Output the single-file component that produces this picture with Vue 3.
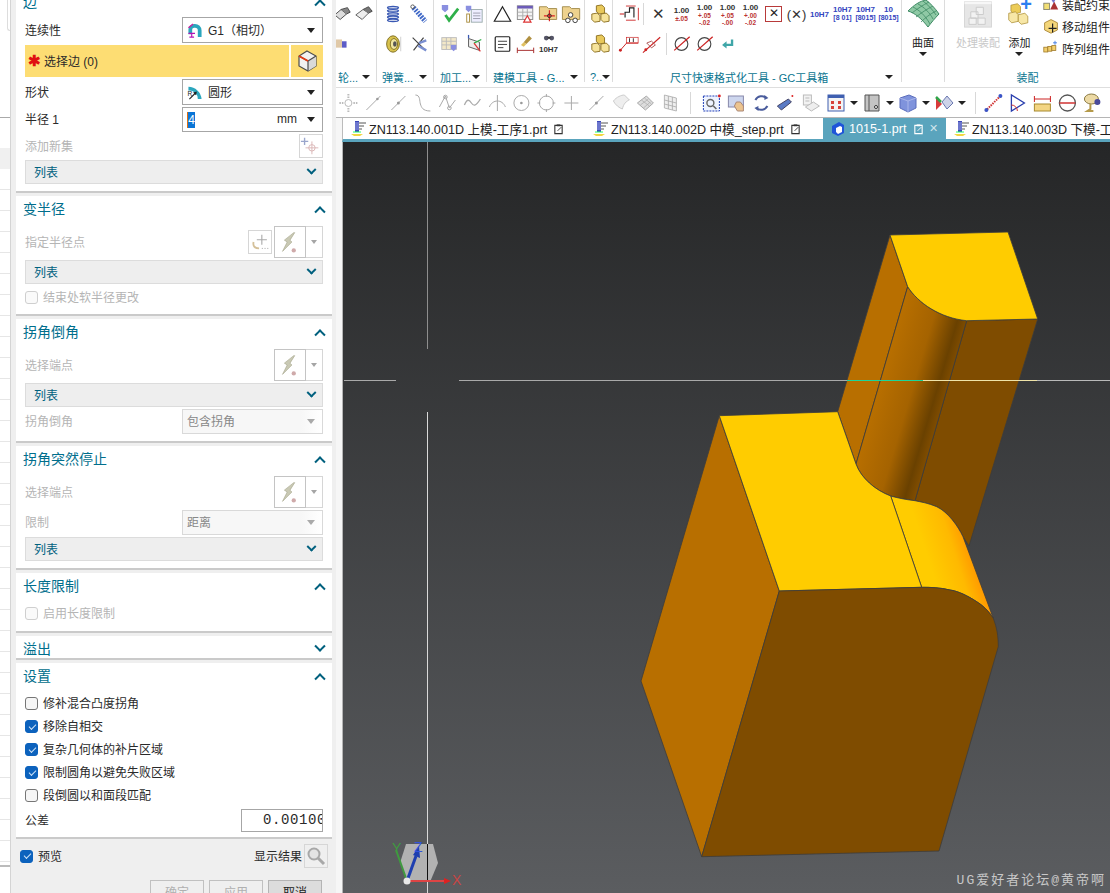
<script setup>
const tb1 = ['t-move','t-line','t-line2','t-curve','t-poly','t-wave','t-arc','t-circ','t-ring','t-plus','t-line2','t-surf','t-mesh','t-grid']
const tb2 = ['t-measure','t-angle','t-ruler','t-dia','t-palette']
const r6a = [
  { t: '1.00', s: '±.05' }, { t: '1.00', s: '+.05\n-.02' }, { t: '1.00', s: '+.05\n-.00' }, { t: '1.00', s: '+.00\n-.02' }
]
</script>

<template>
  <div class="app">
    <svg class="defs" width="0" height="0" aria-hidden="true">
      <symbol id="i-g1" viewBox="0 0 16 16"><path d="M1 12V7a6 6 0 0 1 6-6h1a7 7 0 0 1 7 7v7h-4V8a3 3 0 0 0-3-3H7a2 2 0 0 0-2 2v5z" fill="#2ba6bd"/><path d="M1 5 6 1" stroke="#d01f9d" stroke-width="1.4"/><path d="M1 11h7M4.500 11v4M2 15h5" stroke="#b414b4" stroke-width="1.2" fill="none"/></symbol>
      <symbol id="i-round" viewBox="0 0 16 16"><path d="M1 2a14 14 0 0 1 14 13h-4A9 9 0 0 0 1 6z" fill="#2ba6bd"/><path d="M2 15 9 8" stroke="#222" stroke-width="1.2"/><path d="M6 8 10 7 9 11z" fill="#222"/><text x="0" y="12" font-size="7" fill="#222" font-family="Liberation Sans">R</text></symbol>
      <symbol id="i-cube" viewBox="0 0 22 22"><path d="M11 1 20 6v10l-8 5-9-5V6z" fill="#f2f2f2" stroke="#4d4d4d" stroke-width="1.2"/><path d="M12 11l8-5v10l-8 5z" fill="#d9d9d9"/><path d="M3 6l9 5 8-5M12 11v10" fill="none" stroke="#4d4d4d" stroke-width="1.2"/><path d="M3 6l9 5" stroke="#e23b14" stroke-width="1.8"/></symbol>
      <symbol id="i-target" viewBox="0 0 24 24"><path d="M5 3v8M1 7h8" stroke="#9aa6cc" stroke-width="1.500"/><circle cx="13" cy="14" r="3.500" fill="none" stroke="#d9b3b3"/><path d="M13 7v14M6 14h14" stroke="#d9b3b3"/></symbol>
      <symbol id="i-bolt" viewBox="0 0 32 32"><path d="M20 6 10 14l3 2-5 10 10-10-2-2 5-8z" fill="#c9c9b4" stroke="#a9a98f" stroke-width=".7"/><circle cx="20" cy="25" r="2.300" fill="#cfaaaa"/></symbol>
      <symbol id="i-addpt" viewBox="0 0 24 24"><path d="M14 4v11M8.500 9.500h11" stroke="#aaa" stroke-width="1.200"/><path d="M5 12c-1 4 1 7 6 7" fill="none" stroke="#d4c099" stroke-width="2"/><path d="M14 19h1m2 0h1m2 0h1" stroke="#999"/></symbol>

      <symbol id="r-cut" viewBox="0 0 22 22"><path d="M3 12 10 6l6 5-7 6z" fill="#ddd" stroke="#444"/><path d="M10 6l7-2 3 5-4 2" fill="#888" stroke="#444"/></symbol>
      <symbol id="r-cut2" viewBox="0 0 22 22"><path d="M2 12 10 6l6 4-7 7z" fill="#eee" stroke="#555"/><path d="M10 6l6-3 4 5-4 2" fill="#777" stroke="#444"/></symbol>
      <symbol id="r-tag" viewBox="0 0 22 22"><rect x="3" y="6" width="8" height="9" fill="#e0c9a8"/><rect x="11" y="8" width="5" height="7" fill="#5c5cc8"/></symbol>
      <symbol id="r-coil" viewBox="0 0 22 22"><g stroke="#3958b3" stroke-width="1.500" fill="none"><ellipse cx="11" cy="4" rx="6" ry="1.300"/><ellipse cx="11" cy="7.500" rx="6" ry="1.300"/><ellipse cx="11" cy="11" rx="6" ry="1.300"/><ellipse cx="11" cy="14.500" rx="6" ry="1.300"/><ellipse cx="11" cy="18" rx="6" ry="1.300"/></g></symbol>
      <symbol id="r-spring" viewBox="0 0 22 22"><path d="M5 4 18 19" stroke="#3f68c7" stroke-width="5.500" stroke-dasharray="2 1.200"/><circle cx="4" cy="3" r="2" fill="none" stroke="#555"/></symbol>
      <symbol id="r-roll" viewBox="0 0 22 22"><ellipse cx="11" cy="11" rx="7" ry="9" fill="#d8c24d" stroke="#7b6a20"/><ellipse cx="12" cy="11" rx="4" ry="6" fill="#f0e6a0" stroke="#7b6a20"/><ellipse cx="13" cy="11" rx="2" ry="3" fill="#555"/><path d="M19.500 3v16" stroke="#ccc"/></symbol>
      <symbol id="r-x" viewBox="0 0 22 22"><path d="M4 4 17 17M16 4 5 18" stroke="#444" stroke-width="1.300"/><path d="M11 10 19 7M10 13l9 5" stroke="#7a8fd0" stroke-width="2.600"/></symbol>
      <symbol id="r-ok" viewBox="0 0 22 22"><path d="M2 1h7v5L5.500 9 2 6z" fill="#8a8fe0"/><path d="M6 12 10 18 20 5" fill="none" stroke="#2fb04a" stroke-width="3"/></symbol>
      <symbol id="r-doc" viewBox="0 0 22 22"><rect x="8" y="6" width="12" height="14" fill="#eef" stroke="#9aa"/><path d="M10 10h8M10 13h8M10 16h8" stroke="#99a"/><path d="M2 2h6v4L5 9 2 6z" fill="#8a8fe0"/><rect x="3" y="11" width="3" height="9" fill="none" stroke="#a88b3c"/></symbol>
      <symbol id="r-sheet" viewBox="0 0 22 22"><rect x="2" y="4" width="16" height="13" fill="#f3e8c8" stroke="#bbb"/><path d="M2 8h16M2 12h16M7 4v13M12 4v13" stroke="#bbb"/><path d="M12 12h6v4l-3 3-3-3z" fill="#8a8fe0"/></symbol>
      <symbol id="r-axes" viewBox="0 0 22 22"><path d="M5 5 17 9v9L5 14z" fill="#eee" stroke="#555"/><path d="M5 5V1" stroke="#3958b3" stroke-width="1.400"/><path d="M11 10l8-4" stroke="#2fb04a" stroke-width="1.400"/><path d="M11 10l7 9" stroke="#d33" stroke-width="1.400"/></symbol>
      <symbol id="r-tri" viewBox="0 0 22 22"><path d="M11 3 20 19H2z" fill="#fff" stroke="#222" stroke-width="1.300"/></symbol>
      <symbol id="r-table" viewBox="0 0 22 22"><rect x="2" y="2" width="17" height="15" fill="#f4f4f4" stroke="#888"/><rect x="2" y="2" width="17" height="3" fill="#6c5bb8"/><path d="M2 9h17M2 13h17M8 5v12M13 5v12" stroke="#aaa"/><path d="M13 13 17 20H9z" fill="#fff" stroke="#d33" stroke-width="1.300"/></symbol>
      <symbol id="r-folder1" viewBox="0 0 22 22"><path d="M1 3h8l2 2h9v12H1z" fill="#eed28e" stroke="#a08a4a"/><path d="M12 7v12M6 13h12" stroke="#d22" stroke-width="1.300"/><circle cx="12" cy="13" r="2" fill="none" stroke="#222"/></symbol>
      <symbol id="r-folder2" viewBox="0 0 22 22"><path d="M1 3h8l2 2h9v12H1z" fill="#eed28e" stroke="#a08a4a"/><circle cx="10" cy="12" r="2.500" fill="#fff" stroke="#333"/><circle cx="7" cy="18" r="2.500" fill="#fff" stroke="#333"/><circle cx="15" cy="18" r="2.500" fill="#fff" stroke="#333"/></symbol>
      <symbol id="r-note" viewBox="0 0 22 22"><rect x="3" y="3" width="16" height="16" rx="1" fill="#fff" stroke="#222" stroke-width="1.300"/><path d="M6 8h10M6 11.500h10M6 15h6" stroke="#333"/></symbol>
      <symbol id="r-brush" viewBox="0 0 22 22"><path d="M15 2 18 5 12 11 9 9z" fill="#b09040"/><path d="M9 9l3 2-3 3-3-2z" fill="#e0c060"/><path d="M2 18h18M2 15v6M20 15v6" stroke="#a33" stroke-width="1.100"/></symbol>
      <symbol id="r-bino" viewBox="0 0 22 22"><circle cx="7" cy="6" r="3.500" fill="#556"/><circle cx="15" cy="6" r="3.500" fill="#556"/><rect x="9" y="4" width="4" height="3" fill="#333"/></symbol>
      <symbol id="r-boxes" viewBox="0 0 22 22"><path d="M7 2 13 1l3 3v6l-6 1-3-3z" fill="#e8c85a" stroke="#8a6d1f"/><path d="M2 11l6-1 3 3v6l-6 1-3-3z" fill="#f6e39a" stroke="#8a6d1f"/><path d="M12 11l6-1 3 3v6l-6 1-3-3z" fill="#f6e39a" stroke="#8a6d1f"/></symbol>
      <symbol id="r-dim1" viewBox="0 0 26 22"><path d="M2 11h5" stroke="#c22" stroke-width="1.200"/><path d="M8 15V9h5V4h5v11" fill="none" stroke="#222" stroke-width="1.300"/><path d="M9 18h11M9 2h11M23 4v14" fill="none" stroke="#c22"/></symbol>
      <symbol id="r-rdim" viewBox="0 0 24 20"><path d="M2 17 9 9h12" fill="none" stroke="#c22"/><rect x="9" y="3" width="12" height="6" fill="none" stroke="#c22" stroke-width=".7"/><path d="M12 4v4M16 4v4" stroke="#333"/><circle cx="2.500" cy="16.500" r="1.500" fill="#c22"/></symbol>
      <symbol id="r-rdim2" viewBox="0 0 24 20"><path d="M2 19 20 3" stroke="#c22" stroke-width="1.200"/><path d="M6 9l5-2 4 4-4 3z" fill="none" stroke="#a55"/><circle cx="5" cy="16" r="1.500" fill="#c22"/></symbol>
      <symbol id="r-dia" viewBox="0 0 22 22"><circle cx="11" cy="11" r="7" fill="#fff" stroke="#444" stroke-width="1.200"/><path d="M3 18 20 3" stroke="#c22" stroke-width="1.400"/></symbol>
      <symbol id="r-ret" viewBox="0 0 22 22"><path d="M16 6v6H9" fill="none" stroke="#3fa6a8" stroke-width="2.600"/><path d="M10 8 5 12l5 4z" fill="#3fa6a8"/></symbol>
      <symbol id="r-surface" viewBox="0 0 34 30"><path d="M2 12C8 6 14 2 20 1c4 3 9 8 13 14-4 4-8 9-11 13C16 20 9 14 2 12z" fill="#8fc9a5" stroke="#3f8a65"/><path d="M7 8c6 3 12 8 17 17M12 5c6 3 12 9 15 15M17 2c5 4 10 9 13 14M6 14C11 10 17 6 23 3M10 18c5-4 11-8 17-11M15 23c4-4 9-8 15-11" fill="none" stroke="#3f8a65" stroke-width=".8"/></symbol>
      <symbol id="r-proc" viewBox="0 0 32 30"><rect x="1" y="1" width="30" height="28" fill="#e6e6e6" stroke="#d4d4d4"/><rect x="1" y="1" width="30" height="2.500" fill="#f7f7f7"/><path d="M8 12h8v7H8zM16 19h8v7h-8zM6 19h8v7H6zM14 7h8v8h-8z" fill="#f2f2f2" stroke="#c8c8c8"/></symbol>
      <symbol id="r-add" viewBox="0 0 30 30"><path d="M4 3 13 1l4 4v8l-9 2-4-4z" fill="#eccc58" stroke="#a88a2f"/><path d="M1 14l9-2 4 4v9l-9 2-4-4z" fill="#f7e7a7" stroke="#a88a2f"/><path d="M14 16l9-2 4 4v9l-9 2-4-4z" fill="#f7e7a7" stroke="#a88a2f"/></symbol>
      <symbol id="r-constraint" viewBox="0 0 20 18"><rect x="1" y="8" width="7" height="8" fill="#f1de74" stroke="#776"/><path d="M9 16 14 6l5 10z" fill="#a33"/><path d="M9 1l4 7 4-7" fill="#77c"/></symbol>
      <symbol id="r-mv" viewBox="0 0 20 20"><path d="M2 6 10 2l8 4v9l-8 4-8-4z" fill="#f4d67a" stroke="#a07a28"/><path d="M12 7v11M7 13h10" stroke="#222" stroke-width="1.500"/></symbol>
      <symbol id="r-arr" viewBox="0 0 20 18"><rect x="1" y="8" width="5" height="6" fill="#f2cf6c" stroke="#a07a28"/><rect x="6" y="7" width="5" height="6" fill="#f2cf6c" stroke="#a07a28"/><rect x="11" y="6" width="5" height="6" fill="#f2cf6c" stroke="#a07a28"/><path d="M15 0v5M12.500 2.500h5" stroke="#2d6fe0"/></symbol>

      <symbol id="t-move" viewBox="0 0 20 20"><circle cx="10" cy="10" r="3.500" fill="none" stroke="#bbb"/><path d="M10 1v4M10 15v4M1 10h4M15 10h4" stroke="#bbb" stroke-width="2" stroke-dasharray="1.500 1"/></symbol>
      <symbol id="t-line" viewBox="0 0 20 20"><path d="M3 17 17 3" stroke="#aaa"/><circle cx="14" cy="6" r="1.300" fill="#999"/></symbol>
      <symbol id="t-line2" viewBox="0 0 20 20"><path d="M3 17 17 3" stroke="#aaa"/><circle cx="10" cy="10" r="1.500" fill="#999"/></symbol>
      <symbol id="t-curve" viewBox="0 0 20 20"><path d="M3 2c5 0 4 6 5 9s2 7 10 7" fill="none" stroke="#aaa"/></symbol>
      <symbol id="t-poly" viewBox="0 0 20 20"><path d="M2 14 8 3l4 12 6-8" fill="none" stroke="#aaa"/><circle cx="8" cy="4" r="1.800" fill="none" stroke="#aaa"/><circle cx="12" cy="15" r="1.800" fill="none" stroke="#aaa"/></symbol>
      <symbol id="t-wave" viewBox="0 0 20 20"><path d="M2 12c3-7 5-5 7-2s4 4 9-4" fill="none" stroke="#aaa" stroke-width="1.300"/></symbol>
      <symbol id="t-arc" viewBox="0 0 20 20"><path d="M2 14c3-8 13-8 16 0M10 2v16" fill="none" stroke="#aaa"/></symbol>
      <symbol id="t-circ" viewBox="0 0 20 20"><circle cx="10" cy="10" r="7.500" fill="none" stroke="#aaa"/><circle cx="10" cy="10" r="1.300" fill="#999"/></symbol>
      <symbol id="t-ring" viewBox="0 0 20 20"><circle cx="10" cy="10" r="7" fill="none" stroke="#aaa"/><path d="M10 1v3M10 16v3M1 10h3M16 10h3" stroke="#aaa"/></symbol>
      <symbol id="t-plus" viewBox="0 0 20 20"><path d="M10 3v14M3 10h14" stroke="#aaa"/></symbol>
      <symbol id="t-surf" viewBox="0 0 20 20"><path d="M2 8c3-4 8-6 11-6l5 5c-3 1-6 4-7 9-3-1-7-4-9-8z" fill="#eee" stroke="#ccc"/></symbol>
      <symbol id="t-mesh" viewBox="0 0 20 20"><path d="M2 10 11 3l7 7-8 7z" fill="#ddd" stroke="#aaa"/><path d="M6 7l8 6M9 5l7 6M5 12l8-6M8 15l7-6" stroke="#aaa" stroke-width=".7"/></symbol>
      <symbol id="t-grid" viewBox="0 0 20 20"><path d="M4 2 16 5v13L4 15zM8 3v13M12 4v13M4 7l12 3M4 11l12 3" fill="#eee" stroke="#aaa" stroke-width=".8"/></symbol>
      <symbol id="t-fit" viewBox="0 0 20 20"><rect x="2" y="3" width="16" height="15" fill="#eef3ff" stroke="#2240b8" stroke-dasharray="2 1"/><circle cx="9" cy="10" r="3.500" fill="none" stroke="#666" stroke-width="1.400"/><path d="M12 13l3 3" stroke="#666" stroke-width="1.600"/><circle cx="18" cy="3" r="1.400" fill="#d22"/></symbol>
      <symbol id="t-hand" viewBox="0 0 20 20"><rect x="2" y="3" width="15" height="11" fill="#cdd6ee" stroke="#88a"/><path d="M10 9h4l3 4v5h-6l-3-5z" fill="#ecc48f" stroke="#a87"/></symbol>
      <symbol id="t-rot" viewBox="0 0 20 20"><path d="M4 7a7 7 0 0 1 11-2M16 13a7 7 0 0 1-11 2" fill="none" stroke="#4a5c9c" stroke-width="2"/><path d="M13 2l4 3-4 2zM7 18l-4-3 4-2z" fill="#4a5c9c"/></symbol>
      <symbol id="t-prism" viewBox="0 0 20 20"><path d="M2 13 13 6l3 3-10 8z" fill="#5a7bc5" stroke="#446"/><circle cx="17" cy="3" r="1" fill="#d22"/></symbol>
      <symbol id="t-layers" viewBox="0 0 20 20"><rect x="3" y="2" width="8" height="10" fill="#f2f2f2" stroke="#bbb"/><path d="M5 5h4M5 8h4" stroke="#bbb"/><path d="M5 14l8-5 6 4-8 5z" fill="#eee" stroke="#bbb"/></symbol>
      <symbol id="t-view" viewBox="0 0 20 20"><rect x="2" y="2" width="16" height="16" fill="#f4f4f4" stroke="#3f5fb0"/><rect x="2" y="2" width="16" height="3" fill="#3f5fb0"/><path d="M5 8h3v3H5zM12 8h3v3h-3zM5 13h3v3H5zM12 13h3v3h-3z" fill="#d8433a"/></symbol>
      <symbol id="t-page" viewBox="0 0 20 20"><path d="M3 2h14v16H3z" fill="#c4c4c4" stroke="#555"/><path d="M7 2v16" stroke="#555"/><circle cx="14" cy="14" r="1.500" fill="#fff" stroke="#333"/></symbol>
      <symbol id="t-cube" viewBox="0 0 20 20"><path d="M2 5 11 2l7 3v10l-8 4-8-4z" fill="#7f93dc" stroke="#5b6dbc"/><path d="M2 5l8 3 8-3M10 8v11" fill="none" stroke="#aab6ea"/></symbol>
      <symbol id="t-show" viewBox="0 0 20 20"><path d="M8 9l5-6 6 7-6 6z" fill="#cdd3e8" stroke="#6a78b0"/><path d="M2 5l6 6-6 6z" fill="#d83a3a"/><path d="M2 4l5 5" stroke="#2fa54a" stroke-width="2.500"/></symbol>
      <symbol id="t-measure" viewBox="0 0 20 20"><path d="M2 18 18 2" stroke="#d03333" stroke-width="2" stroke-dasharray="1.500 1"/><circle cx="3" cy="17" r="2" fill="#3a55c8"/><circle cx="17" cy="3" r="2" fill="#3a55c8"/></symbol>
      <symbol id="t-angle" viewBox="0 0 20 20"><path d="M3 18V2l13 8z" fill="none" stroke="#2a3fae" stroke-width="1.300"/><path d="M3 12a6 6 0 0 1 6 6" fill="none" stroke="#d03333"/></symbol>
      <symbol id="t-ruler" viewBox="0 0 20 20"><rect x="2" y="11" width="16" height="7" fill="#f3d583" stroke="#a78a2f"/><path d="M2 6h16M2 3v6M18 3v6" stroke="#c22"/></symbol>
      <symbol id="t-dia" viewBox="0 0 20 20"><circle cx="10" cy="10" r="8" fill="#fff" stroke="#555" stroke-width="1.300"/><path d="M2 10h16" stroke="#d03333" stroke-width="1.400"/></symbol>
      <symbol id="t-palette" viewBox="0 0 20 20"><ellipse cx="9" cy="6" rx="7" ry="5" fill="#ecd9a4" stroke="#8a7a44"/><circle cx="15" cy="9" r="3" fill="#4a4a9a"/><path d="M8 11v5l-3 2h6" fill="none" stroke="#b59a4a" stroke-width="2"/></symbol>
      <symbol id="p-part" viewBox="0 0 16 18"><path d="M5 1h4v11H5z" fill="#3b47b8"/><path d="M5 3h4M5 5h4M5 7h4M5 9h4" stroke="#b7bfee" stroke-width=".8"/><path d="M9 3h7M9 6h5M9 9h3" stroke="#555"/><path d="M1 14h12l-3 2H4z" fill="#f3d640"/><path d="M3 12h8" stroke="#2f6"/></symbol>
      <symbol id="p-active" viewBox="0 0 16 16"><path d="M2 5 9 1l5 3v8l-6 3-6-3z" fill="#1f55d8"/><path d="M6 7l4-2 2 1v5l-4 2-2-2z" fill="#fff"/></symbol>
      <symbol id="p-mod" viewBox="0 0 12 12"><path d="M2 2h8v9H2z" fill="none" stroke="currentColor" stroke-width="1.200"/><path d="M4 1h4v2H4z" fill="currentColor"/><path d="M5 8l4-4" stroke="currentColor"/></symbol>
    </svg>

    <aside class="left">
      <div class="strip"><div class="strip-top"></div><div class="strip-rows"></div></div>
      <div class="dialog">
        <section class="sec first">
          <header class="hd"><span>边</span><i class="chev up"></i></header>
          <div class="body b-first">
            <div class="row h26"><label>连续性</label><div class="sel"><svg class="si"><use href="#i-g1"/></svg><span class="grow">G1（相切）</span><b class="tri"></b></div></div>
            <div class="pick">
              <div class="pick-l"><em>✱</em><span>选择边 (0)</span></div>
              <div class="pick-r"><svg class="cube"><use href="#i-cube"/></svg></div>
            </div>
            <div class="row h26"><label>形状</label><div class="sel"><svg class="si"><use href="#i-round"/></svg><span class="grow">圆形</span><b class="tri"></b></div></div>
            <div class="row h25"><label>半径 1</label><div class="sel num"><span class="hl">4</span><span class="unit">mm</span><b class="tri"></b></div></div>
            <div class="row h24"><label class="off">添加新集</label><div class="ibtn s24"><svg class="s22"><use href="#i-target"/></svg></div></div>
            <div class="list"><span>列表</span><i class="chev down"></i></div>
          </div>
        </section>

        <section class="sec">
          <header class="hd"><span>变半径</span><i class="chev up"></i></header>
          <div class="body b6">
            <div class="row h32"><label class="off">指定半径点</label>
              <div class="tools"><div class="ibtn s24"><svg class="s22"><use href="#i-addpt"/></svg></div><div class="ibtn s32"><svg class="s30"><use href="#i-bolt"/></svg></div><div class="ddb"><b class="tri sm"></b></div></div>
            </div>
            <div class="list"><span>列表</span><i class="chev down"></i></div>
            <div class="chk off h22"><i class="box"></i><span>结束处软半径更改</span></div>
          </div>
        </section>

        <section class="sec">
          <header class="hd"><span>拐角倒角</span><i class="chev up"></i></header>
          <div class="body">
            <div class="row h32"><label class="off">选择端点</label>
              <div class="tools"><div class="ibtn s32"><svg class="s30"><use href="#i-bolt"/></svg></div><div class="ddb"><b class="tri sm"></b></div></div>
            </div>
            <div class="list"><span>列表</span><i class="chev down"></i></div>
            <div class="row h25"><label class="off">拐角倒角</label><div class="sel dis"><span class="grow">包含拐角</span><b class="tri g"></b></div></div>
          </div>
        </section>

        <section class="sec">
          <header class="hd"><span>拐角突然停止</span><i class="chev up"></i></header>
          <div class="body">
            <div class="row h32"><label class="off">选择端点</label>
              <div class="tools"><div class="ibtn s32"><svg class="s30"><use href="#i-bolt"/></svg></div><div class="ddb"><b class="tri sm"></b></div></div>
            </div>
            <div class="row h25"><label class="off">限制</label><div class="sel dis"><span class="grow">距离</span><b class="tri g"></b></div></div>
            <div class="list"><span>列表</span><i class="chev down"></i></div>
          </div>
        </section>

        <section class="sec">
          <header class="hd"><span>长度限制</span><i class="chev up"></i></header>
          <div class="body b3">
            <div class="chk off h22"><i class="box"></i><span>启用长度限制</span></div>
          </div>
        </section>

        <section class="sec">
          <header class="hd short"><span>溢出</span><i class="chev down big"></i></header>
        </section>

        <section class="sec">
          <header class="hd"><span>设置</span><i class="chev up"></i></header>
          <div class="body b-set">
            <div class="chk h23"><i class="box"></i><span>修补混合凸度拐角</span></div>
            <div class="chk h23"><i class="box on"></i><span>移除自相交</span></div>
            <div class="chk h23"><i class="box on"></i><span>复杂几何体的补片区域</span></div>
            <div class="chk h23"><i class="box on"></i><span>限制圆角以避免失败区域</span></div>
            <div class="chk h23"><i class="box"></i><span>段倒圆以和面段匹配</span></div>
            <div class="row h23 tol"><label>公差</label><div class="tolv">0.00100</div></div>
          </div>
        </section>

        <footer class="foot">
          <div class="foot-row">
            <div class="chk"><i class="box on"></i><span>预览</span></div>
            <div class="res"><span>显示结果</span><div class="mag"><svg width="20" height="20" viewBox="0 0 20 20"><circle cx="8" cy="8" r="5.500" fill="#e4e4e4" stroke="#a8a8a8" stroke-width="2"/><path d="M12 12l6 6" stroke="#a8a8a8" stroke-width="3"/></svg></div></div>
          </div>
          <div class="btns"><div class="btn dim">确定</div><div class="btn dim">应用</div><div class="btn act">取消</div></div>
        </footer>
      </div>
    </aside>

    <main class="main">
      <div class="ribbon">
        <div class="grp g1">
          <div class="r"><svg class="ri c22"><use href="#r-cut"/></svg><svg class="ri c22"><use href="#r-cut2"/></svg></div>
          <div class="r"><svg class="ri c22"><use href="#r-tag"/></svg></div>
          <div class="gl"><span>轮...</span><b class="tri k"></b></div>
        </div>
        <div class="grp g2">
          <div class="r"><svg class="ri c26"><use href="#r-coil"/></svg><svg class="ri c26"><use href="#r-spring"/></svg></div>
          <div class="r"><svg class="ri c26"><use href="#r-roll"/></svg><svg class="ri c26"><use href="#r-x"/></svg></div>
          <div class="gl"><span>弹簧...</span><b class="tri k"></b></div>
        </div>
        <div class="grp g3">
          <div class="r"><svg class="ri c24"><use href="#r-ok"/></svg><svg class="ri c24"><use href="#r-doc"/></svg></div>
          <div class="r"><svg class="ri c24"><use href="#r-sheet"/></svg><svg class="ri c24"><use href="#r-axes"/></svg></div>
          <div class="gl"><span>加工...</span><b class="tri k"></b></div>
        </div>
        <div class="grp g4">
          <div class="r"><svg class="ri c23"><use href="#r-tri"/></svg><svg class="ri c23"><use href="#r-table"/></svg><svg class="ri c23"><use href="#r-folder1"/></svg><svg class="ri c23"><use href="#r-folder2"/></svg></div>
          <div class="r"><svg class="ri c23"><use href="#r-note"/></svg><svg class="ri c23"><use href="#r-brush"/></svg><div class="cell23 bino"><svg class="b18"><use href="#r-bino"/></svg><span>10H7</span></div></div>
          <div class="gl"><span>建模工具 - G...</span><b class="tri k"></b></div>
        </div>
        <div class="grp g5">
          <div class="r"><svg class="ri c24"><use href="#r-boxes"/></svg></div>
          <div class="r"><svg class="ri c24"><use href="#r-boxes"/></svg></div>
          <div class="gl"><span>?..</span><b class="tri k"></b></div>
        </div>
        <div class="grp g6">
          <div class="r">
            <svg class="ri c23"><use href="#r-dim1"/></svg><i class="vs"></i>
            <span class="c23 xx">✕</span>
            <span v-for="v in r6a" :key="v.s" class="c23 tol-t"><u>{{ v.t }}</u><s>{{ v.s }}</s></span>
            <span class="c23 bx"><i>✕</i></span>
            <span class="c23 px">(✕)</span>
            <span class="c23 h7">10H7</span>
            <span class="c23 h7b"><u>10H7</u><s>[8 01]</s></span>
            <span class="c23 h7b"><u>10H7</u><s>[8015]</s></span>
            <span class="c23 h7b"><u>10</u><s>[8015]</s></span>
          </div>
          <div class="r">
            <svg class="ri c23"><use href="#r-rdim"/></svg><svg class="ri c23"><use href="#r-rdim2"/></svg><i class="vs"></i>
            <svg class="ri c23"><use href="#r-dia"/></svg><svg class="ri c23"><use href="#r-dia"/></svg><svg class="ri c23"><use href="#r-ret"/></svg>
          </div>
          <div class="gl wide"><span>尺寸快速格式化工具 - GC工具箱</span><b class="tri k"></b></div>
        </div>
        <div class="grp g7">
          <svg class="surf"><use href="#r-surface"/></svg>
          <span class="big-l">曲面</span><b class="tri k drop"></b>
        </div>
        <div class="grp g8">
          <div class="tall">
            <div class="bigb"><svg class="proc"><use href="#r-proc"/></svg><span class="big-l dimt">处理装配</span></div>
            <div class="bigb addb"><svg class="addi"><use href="#r-add"/></svg><i class="plus">+</i><span class="big-l">添加</span><b class="tri k drop"></b></div>
            <div class="mini">
              <div><svg><use href="#r-constraint"/></svg><span>装配约束</span></div>
              <div><svg><use href="#r-mv"/></svg><span>移动组件</span></div>
              <div><svg><use href="#r-arr"/></svg><span>阵列组件</span></div>
            </div>
          </div>
          <div class="gl center"><span>装配</span></div>
        </div>
      </div>

      <div class="toolbar">
        <svg v-for="(n, i) in tb1" :key="i" class="tbi"><use :href="'#' + n"/></svg>
        <i class="tsep s1"></i>
        <svg class="tbi"><use href="#t-fit"/></svg><svg class="tbi"><use href="#t-hand"/></svg><svg class="tbi"><use href="#t-rot"/></svg><svg class="tbi"><use href="#t-prism"/></svg><svg class="tbi"><use href="#t-layers"/></svg>
        <div class="dd first-dd"><svg class="tbs"><use href="#t-view"/></svg><b class="tri k"></b></div>
        <div class="dd"><svg class="tbs"><use href="#t-page"/></svg><b class="tri k"></b></div>
        <div class="dd"><svg class="tbs"><use href="#t-cube"/></svg><b class="tri k"></b></div>
        <div class="dd"><svg class="tbs"><use href="#t-show"/></svg><b class="tri k"></b></div>
        <i class="tsep s2"></i>
        <svg v-for="n in tb2" :key="n" class="tbi"><use :href="'#' + n"/></svg>
      </div>

      <div class="tabs">
        <div class="tab tab1"><svg class="pi"><use href="#p-part"/></svg><span>ZN113.140.001D 上模-工序1.prt</span><svg class="mod"><use href="#p-mod"/></svg></div>
        <div class="tab tab2"><svg class="pi"><use href="#p-part"/></svg><span>ZN113.140.002D 中模_step.prt</span><svg class="mod"><use href="#p-mod"/></svg></div>
        <div class="tab active"><svg class="pi"><use href="#p-active"/></svg><span>1015-1.prt</span><svg class="mod"><use href="#p-mod"/></svg><i class="close">✕</i></div>
        <div class="tab"><svg class="pi"><use href="#p-part"/></svg><span>ZN113.140.003D 下模-工序1.prt</span></div>
      </div>

      <div class="view">
        <svg class="scene" viewBox="343 142 767 751" width="767" height="751">
          <defs>
            <linearGradient id="fil" gradientUnits="userSpaceOnUse" x1="880" y1="380" x2="944" y2="399">
              <stop offset="0" stop-color="#b86f00"/><stop offset=".5" stop-color="#a56300"/><stop offset=".86" stop-color="#6a4100"/><stop offset="1" stop-color="#7f4c00"/>
            </linearGradient>
            <linearGradient id="yel" gradientUnits="userSpaceOnUse" x1="925" y1="550" x2="968" y2="536">
              <stop offset="0" stop-color="#ffcc00"/><stop offset=".6" stop-color="#ffb900"/><stop offset="1" stop-color="#ff9500"/>
            </linearGradient>
          </defs>
          <g stroke="#3c3c3c" stroke-width=".8" stroke-linejoin="round">
            <path d="M890 235 907.700 286.700 856 464 837.700 411.700z" fill="#b86f00"/>
            <path d="M966.700 320.700 1037.700 319 969 546 963 536.700C958 526 948 512 936.700 506.700 928 503 921 502 915 500.700z" fill="#7f4c00"/>
            <path d="M907.700 286.700C918 303 940 318 966.700 320.700L915 500.700C905 499.500 898 498 890.700 496 875 490 861 478 856 464z" fill="url(#fil)"/>
            <path d="M890 235 1008 232 1037.700 319 966.700 320.700C940 318 918 303 907.700 286.700z" fill="#ffcc00"/>
            <path d="M719.300 415.700 779.300 591 701.700 856.700 641 681z" fill="#b86f00"/>
            <path d="M890.700 496C898 498 905 499.500 915 500.700 921 502 928 503 936.700 506.700 948 512 958 526 963 536.700L993.300 618.300C988 610 982 605 976.700 601.700 968 596 958 591 950 590 940 587.500 930 587.300 921.700 587.300z" fill="url(#yel)"/>
            <path d="M719.300 415.700 837.700 411.700 856 464C861 478 875 490 890.700 496L921.700 587.300 779.300 591z" fill="#ffcc00"/>
            <path d="M779.300 591 921.700 587.300C930 587.300 940 587.500 950 590 958 591 968 596 976.700 601.700 982 605 988 610 993.300 618.300 997 628 998.300 636 998.300 646.700L939 851 701.700 856.700z" fill="#7f4c00"/>
          </g>
          <path d="M344 380.500H396M459 380.500H847" stroke="#a9a9a9"/>
          <path d="M847 380.500H923" stroke="#1dd69a"/>
          <path d="M923 380.500H1037" stroke="#efe3a8"/>
          <path d="M1037 380.500H1110" stroke="#b9b9b9"/>
          <path d="M427.500 142V349" stroke="#8e8e8e"/>
          <path d="M427.500 412V844M427.500 882V893" stroke="#d9d9d9"/>
          <path d="M406 844h27l5 19-8 19h-22l-8-19z" fill="#b2b2b2"/>
          <path d="M427.500 844V882" stroke="#111"/>
          <path d="M407 881 396 850" stroke="#3f9a3f" stroke-width="2"/>
          <path d="M407 881 416 856" stroke="#1f3fb0" stroke-width="3"/><path d="M413 855 419 846 420 858z" fill="#1f3fb0"/>
          <path d="M407 881H448" stroke="#d44" stroke-width="2"/><path d="M444 878 451 881 444 884z" fill="#d22"/>
          <circle cx="407" cy="881" r="3.500" fill="#e8e8e8"/>
          <text x="392" y="853" class="ax" fill="#3f9a3f">Y</text>
          <text x="414" y="852" class="ax" fill="#3355dd">Z</text>
          <text x="452" y="885" class="ax" fill="#c94444">X</text>
        </svg>
        <div class="mark">UG爱好者论坛@黄帝啊</div>
      </div>
    </main>
  </div>
</template>

<style>
html, body { margin: 0; padding: 0; background: #fff; }
</style>

<style scoped>
.app { width: 1110px; height: 893px; display: flex; overflow: hidden; position: relative; font-family: "Liberation Sans", "Noto Sans CJK SC", sans-serif; font-size: 12px; color: #2a2a2a; background: #fff; }
.defs { position: absolute; }
svg { display: block; }

.left { width: 336px; flex: none; display: flex; height: 893px; background: #efefef; }
.strip { width: 10px; flex: none; background: #fff; border-right: 1px solid #d4d4d4; box-sizing: content-box; height: 893px; overflow: hidden; }
.strip-top { height: 148px; position: relative; box-sizing: border-box; background: linear-gradient(#fff 117px, #aaa 117px, #aaa 118px, #fff 118px); }
.strip-top::before { content: ""; position: absolute; right: 0; top: -2px; width: 3px; height: 33px; border: 1px solid #ddd; border-right: 0; border-bottom-left-radius: 4px; box-sizing: border-box; }
.strip-rows { height: 717px; border-bottom: 2px solid #bbb; background: linear-gradient(#f0f0f0 21px, transparent 21px), repeating-linear-gradient(#fff 0, #fff 20px, #e6e6e6 20px, #e6e6e6 21px); }
.dialog { width: 316px; margin-left: 5px; flex: none; margin-top: -11px; }

.sec { background: #fff; border-bottom: 2px solid #cacaca; margin-bottom: 3px; }
.hd { height: 26px; display: flex; align-items: center; justify-content: space-between; padding: 0 8px 0 7px; font-size: 14px; color: #006e8c; }
.hd span { padding-bottom: 2px; }
.hd.short { height: 22px; padding-top: 4px; box-sizing: border-box; }
.chev { width: 7px; height: 7px; border: solid #00607e; border-width: 2px 0 0 2px; display: block; box-sizing: border-box; }
.chev.up { width: 8px; height: 8px; transform: rotate(45deg) translate(2px, 2px); }
.chev.down { transform: rotate(225deg) translate(2px, 2px); width: 7px; height: 7px; }
.hd .chev.down { width: 8px; height: 8px; }

.body { padding: 4px 9px 7px; display: flex; flex-direction: column; gap: 2px; }
.body span, label { padding-bottom: 2px; }
.b-first { padding-top: 2px; }
.b6 { padding-bottom: 6px; }
.b3 { padding-top: 3px; }
.b-set { padding-top: 3px; padding-bottom: 5px; gap: 0; }
.row { display: flex; align-items: center; justify-content: space-between; }
.h22 { height: 22px; }
.h23 { height: 23px; }
.h24 { height: 24px; }
.h25 { height: 25px; }
.h26 { height: 26px; }
.h32 { height: 32px; }
.off, .off span { color: #b5b5b5; }
.sel { width: 141px; height: 100%; box-sizing: border-box; border: 1px solid #a6a6a6; display: flex; align-items: center; padding: 0 5px 0 4px; background: #fff; }
.si { width: 16px; height: 15px; margin-right: 5px; }
.grow { flex: 1; }
.tri { width: 0; height: 0; border: 4px solid transparent; border-top: 5px solid #222; border-bottom: 0; display: block; flex: none; margin-right: 2px; }
.tri.sm { border-top-color: #a5a5a5; border-width: 4px 3px 0; }
.tri.g { border-top-color: #aaa; }
.tri.k { border-width: 4px 4px 0; border-top-color: #222; margin: 0; }
.num { padding-left: 4px; }
.body .hl { background: #0a74d6; color: #fff; width: 7px; height: 16px; line-height: 16px; text-align: center; border-left: 1px solid #e07010; padding: 0; }
.unit { margin-left: auto; margin-right: 10px; font-size: 12px; }
.dis { border-color: #d9d9d9; background: linear-gradient(90deg, #f7f7f7 85%, #fff); }
.dis span { color: #888; }
.pick { height: 32px; display: flex; gap: 2px; }
.pick-l { width: 264px; background: #fddd73; display: flex; align-items: center; padding-left: 3px; box-sizing: border-box; }
.pick-l em { color: #e01010; font-style: normal; font-size: 15px; font-weight: 700; width: 16px; }
.pick-r { width: 32px; background: #fddd73; display: flex; align-items: center; justify-content: center; }
.cube { width: 22px; height: 22px; }
.ibtn { border: 1px solid #d6d6d6; box-sizing: border-box; display: flex; align-items: center; justify-content: center; background: #fff; }
.s24 { width: 24px; height: 24px; }
.s32 { width: 32px; height: 32px; border-color: #c4c4c4; }
.s22 { width: 22px; height: 22px; }
.s30 { width: 30px; height: 30px; }
.tools { display: flex; align-items: center; gap: 2px; }
.ddb { width: 17px; height: 32px; border: 1px solid #d6d6d6; border-left: 0; margin-left: -2px; box-sizing: border-box; display: flex; align-items: center; justify-content: center; }
.ddb .tri { margin: 0; }
.list { height: 24px; box-sizing: border-box; background: #eee; border: 1px solid #dcdcdc; display: flex; align-items: center; justify-content: space-between; padding: 0 7px 0 8px; }
.body .list span { color: #00617f; }
.chk { display: flex; align-items: center; gap: 5px; }
.foot .chk span, .res span { padding-bottom: 2px; }
.box { width: 13px; height: 13px; box-sizing: border-box; border: 1px solid #767676; border-radius: 3px; background: #f6f6f6; display: block; flex: none; position: relative; }
.off .box { border-color: #cfcfcf; background: #fafafa; }
.box.on { background: #0c62bd; border-color: #0c62bd; }
.box.on::after { content: ""; position: absolute; left: 3px; top: 2.500px; width: 6px; height: 3px; border: solid #cfe3f7; border-width: 0 0 1.200px 1.200px; transform: rotate(-45deg); }
.tol { margin-top: 2px; }
.tolv { width: 82px; height: 100%; box-sizing: border-box; border: 1px solid #a6a6a6; padding-left: 21px; font: 14px "Liberation Mono", monospace; letter-spacing: .6px; line-height: 21px; overflow: hidden; white-space: nowrap; }
.foot { padding: 2px 4px 0; height: 60px; }
.foot-row { display: flex; align-items: center; justify-content: space-between; height: 24px; }
.res { display: flex; align-items: center; gap: 2px; }
.mag { width: 24px; height: 24px; border: 1px solid #d6d6d6; box-sizing: border-box; display: flex; align-items: center; justify-content: center; }
.btns { display: flex; justify-content: flex-end; gap: 5px; padding-right: 6px; margin-top: 12px; }
.btn { width: 54px; height: 24px; box-sizing: border-box; border: 1px solid #c0c0c0; text-align: center; line-height: 24px; }
.dim { color: #b0b0b0; }
.act { background: #dcdcdc; border-color: #b4b4b4; color: #222; }

.main { flex: 1; min-width: 0; display: flex; flex-direction: column; height: 893px; background: #f6f6f6; }
.ribbon { height: 87px; flex: none; display: flex; background: #fff; border-bottom: 1px solid #dedede; box-sizing: content-box; overflow: hidden; }
.grp { height: 82px; border-right: 1px solid #dcdcdc; box-sizing: border-box; flex: none; position: relative; }
.r { height: 30px; display: flex; align-items: center; }
.grp > .r:first-child { height: 28px; margin-bottom: 1px; }
.gl { height: 22px; display: flex; align-items: center; color: #0a7590; font-size: 11px; justify-content: space-between; margin-top: 7px; padding: 0 6px 0 2px; white-space: nowrap; }
.gl.wide { justify-content: flex-start; padding-left: 52px; position: relative; }
.gl.wide .tri { position: absolute; right: 8px; top: 9px; }
.gl.center { justify-content: center; padding: 0; margin-top: 0; }
.ri { height: 20px; flex: none; }
.c22 { width: 22px; }
.c23 { width: 23px; flex: none; }
.c24 { width: 24px; }
.c26 { width: 26px; }
.g1 { width: 41px; }
.g1 .r { margin-left: -5px; }
.g2 { width: 57px; padding-left: 3px; }
.g3 { width: 53px; padding-left: 4px; }
.g4 { width: 98px; padding-left: 4px; }
.g5 { width: 28px; padding-left: 3px; }
.g6 { width: 289px; padding-left: 5px; }
.g7 { width: 43px; display: flex; flex-direction: column; align-items: center; }
.g8 { width: 165px; border-right: 0; }
.cell23 { width: 23px; }
.bino { display: flex; flex-direction: column; align-items: center; font-size: 8px; font-weight: 700; color: #333; line-height: 8px; }
.b18 { width: 18px; height: 15px; margin-bottom: -3px; }
.vs { width: 1px; height: 22px; background: #d8d8d8; margin: 0 3px 0 2px; flex: none; display: block; }
.xx { text-align: center; font-size: 15px; color: #333; }
.tol-t { display: flex; flex-direction: column; align-items: center; line-height: 7px; font-size: 8px; font-weight: 700; color: #333; }
.tol-t u { text-decoration: none; line-height: 9px; }
.tol-t s { text-decoration: none; color: #b33; font-size: 6.500px; white-space: pre-line; text-align: center; }
.bx { display: flex; justify-content: center; }
.bx i { width: 17px; height: 16px; border: 1.500px solid #b83a3a; box-sizing: border-box; font-style: normal; text-align: center; line-height: 13px; font-size: 12px; color: #222; }
.px { text-align: center; font-size: 13px; color: #333; white-space: nowrap; }
.h7 { color: #3344c0; font-size: 8px; font-weight: 700; text-align: center; }
.h7b { display: flex; flex-direction: column; align-items: center; color: #3344c0; font-size: 8px; line-height: 8px; font-weight: 700; }
.h7b u { text-decoration: none; }
.h7b s { text-decoration: none; font-size: 7px; }
.surf { width: 34px; height: 30px; margin-top: -1px; }
.big-l { margin-top: 5px; line-height: 18px; color: #222; font-size: 11px; }
.drop { margin-top: 7px; }
.tall { display: flex; height: 66px; }
.bigb { display: flex; flex-direction: column; align-items: center; position: relative; }
.bigb:first-child { width: 56px; margin-left: 11px; }
.addb { width: 44px; margin-left: 4px; }
.proc { width: 30px; height: 27px; margin-top: 1px; }
.big-l.dimt { color: #c8c8c8; margin-top: 6px; white-space: nowrap; }
.addi { width: 22px; height: 28px; }
.plus { position: absolute; right: 3px; top: -7px; color: #2b7ff0; font-size: 20px; font-style: normal; font-weight: 700; line-height: 22px; }
.addb .big-l { margin-top: 6px; }
.mini { display: flex; flex-direction: column; margin-left: 8px; margin-top: -7px; }
.mini div { display: flex; align-items: center; gap: 3px; height: 22px; white-space: nowrap; color: #222; }
.mini svg { width: 16px; height: 16px; flex: none; }

.toolbar { height: 30px; flex: none; background: #fff; border-bottom: 1px solid #b5b5b5; display: flex; align-items: center; box-sizing: border-box; }
.tbi { width: 20px; height: 20px; padding: 0 2.400px; flex: none; box-sizing: content-box; }
.tsep { width: 1px; height: 22px; background: #d8d8d8; flex: none; display: block; }
.s1 { margin: 0 8px 0 7px; }
.s2 { margin: 0 5px 0 6px; }
.dd { display: flex; align-items: center; margin-left: 1.500px; }
.first-dd { margin-left: 3.500px; }
.tbs { width: 20px; height: 20px; flex: none; }
.dd .tri.k { margin: 0 2.500px 0 4px; }

.tabs { display: flex; flex: none; background: #fff; margin-left: 6px; border-left: 1px solid #bbb; border-bottom: 3px solid #5aa4bd; box-sizing: content-box; height: 21px; font-size: 12.600px; color: #222; overflow: hidden; }
.tab { display: flex; align-items: center; flex: none; white-space: nowrap; box-sizing: border-box; padding-left: 7px; }
.pi { width: 16px; height: 18px; margin-right: 3px; flex: none; }
.mod { width: 11px; height: 12px; margin-left: 6px; flex: none; color: #333; }
.tab1 { width: 242px; }
.tab2 { width: 238px; }
.active { width: 123px; background: #5aa4bd; color: #fff; }
.active .mod { color: #fff; margin-left: 7px; }
.close { font-style: normal; font-size: 11px; margin-left: 5px; color: #cfe3ea; }

.view { flex: 1; position: relative; margin-left: 6px; border-left: 1px solid #b5b5b5; background: linear-gradient(#252627, #5b5d60); overflow: hidden; }
.scene { position: absolute; left: 0; top: 0; }
.ax { font: 14px "Liberation Sans", sans-serif; }
.mark { position: absolute; right: 4px; bottom: 5px; color: #c8c8c8; font: 13px "Liberation Mono", "Noto Sans CJK SC", monospace; letter-spacing: 2px; white-space: nowrap; }
</style>
